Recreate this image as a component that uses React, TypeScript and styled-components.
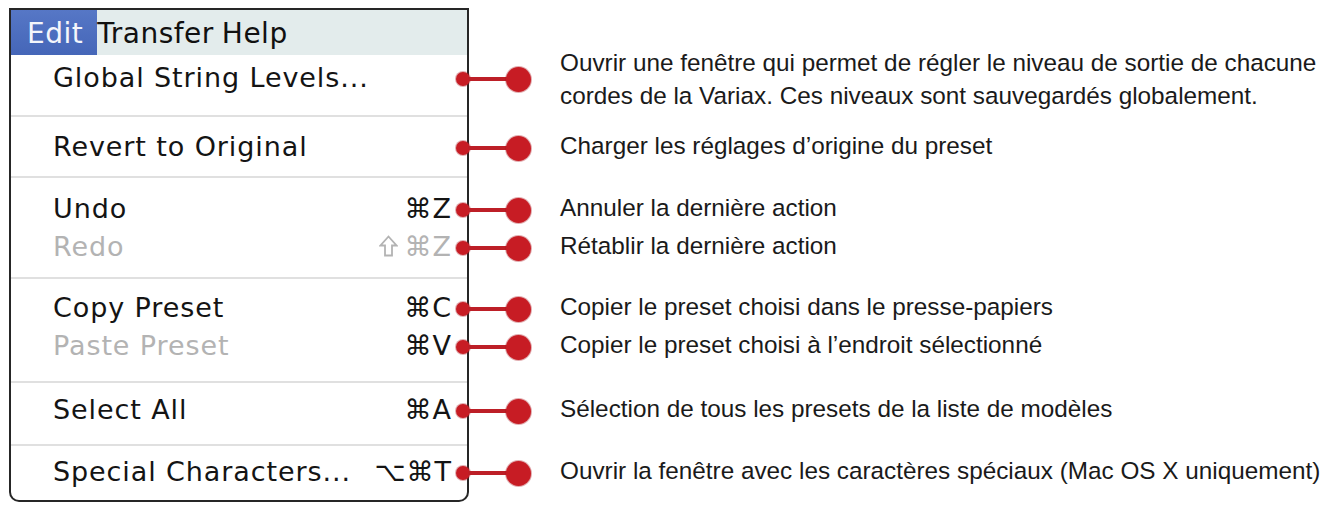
import React from 'react'
import styled, { createGlobalStyle } from 'styled-components'

const GlobalStyle = createGlobalStyle`
  html, body {
    margin: 0;
    padding: 0;
    background: #fff;
  }
`

type Entry = {
  label: string
  keys?: string
  shift?: boolean
  disabled?: boolean
  note: string[]
}

type Group = {
  top: number
  bottom: number
  entries: Entry[]
}

const groups: Group[] = [
  {
    top: 5,
    bottom: 17,
    entries: [
      {
        label: 'Global String Levels...',
        note: [
          'Ouvrir une fenêtre qui permet de régler le niveau de sortie de chacune',
          'cordes de la Variax. Ces niveaux sont sauvegardés globalement.',
        ],
      },
    ],
  },
  {
    top: 12,
    bottom: 9,
    entries: [
      { label: 'Revert to Original', note: ['Charger les réglages d’origine du preset'] },
    ],
  },
  {
    top: 13,
    bottom: 10,
    entries: [
      { label: 'Undo', keys: '⌘Z', note: ['Annuler la dernière action'] },
      { label: 'Redo', keys: '⌘Z', shift: true, disabled: true, note: ['Rétablir la dernière action'] },
    ],
  },
  {
    top: 11,
    bottom: 15,
    entries: [
      { label: 'Copy Preset', keys: '⌘C', note: ['Copier le preset choisi dans le presse-papiers'] },
      {
        label: 'Paste Preset',
        keys: '⌘V',
        disabled: true,
        note: ['Copier le preset choisi à l’endroit sélectionné'],
      },
    ],
  },
  {
    top: 9,
    bottom: 14,
    entries: [
      { label: 'Select All', keys: '⌘A', note: ['Sélection de tous les presets de la liste de modèles'] },
    ],
  },
  {
    top: 8,
    bottom: 8,
    entries: [
      {
        label: 'Special Characters...',
        keys: '⌥⌘T',
        note: ['Ouvrir la fenêtre avec les caractères spéciaux (Mac OS X uniquement)'],
      },
    ],
  },
]

// outline shift arrow, as drawn in the Mac menu
const ShiftIcon = () => (
  <svg width="19" height="22" viewBox="0 0 19 22" fill="none">
    <path
      d="M9.5 1.5 L17.5 10.5 H13 V20.5 H6 V10.5 H1.5 Z"
      stroke="currentColor"
      strokeWidth="1.8"
      strokeLinejoin="miter"
    />
  </svg>
)

export default function App() {
  return (
    <Page>
      <GlobalStyle />
      <MenuBar>
        <BarItem $active>Edit</BarItem>
        <BarItem>Transfer</BarItem>
        <BarItem>Help</BarItem>
      </MenuBar>
      {groups.map((group, gi) => {
        const last = gi === groups.length - 1
        return (
          <React.Fragment key={gi}>
            {gi > 0 && <Separator />}
            <GroupPad $h={group.top} />
            {group.entries.map((entry) => (
              <Row key={entry.label}>
                <Item $disabled={entry.disabled}>
                  <span>{entry.label}</span>
                  {entry.keys && (
                    <Keys $dim={entry.shift}>
                      {entry.shift && <ShiftIcon />}
                      {entry.keys}
                    </Keys>
                  )}
                </Item>
                <Callout>
                  <SmallDot />
                  <Line />
                  <BigDot />
                </Callout>
                <Note $multi={entry.note.length > 1}>
                  {entry.note.map((line) => (
                    <div key={line}>{line}</div>
                  ))}
                </Note>
              </Row>
            ))}
            <GroupPad $h={group.bottom} $last={last} />
          </React.Fragment>
        )
      })}
    </Page>
  )
}

const MENU_W = 460
const BORDER = '2px solid #262626'

const Page = styled.div`
  display: flex;
  flex-direction: column;
  padding: 8px 0 0 9px;
  font-family: 'DejaVu Sans', Verdana, sans-serif;
`

const MenuBar = styled.div`
  box-sizing: border-box;
  width: ${MENU_W}px;
  height: 47px;
  display: flex;
  align-items: stretch;
  background: #e3ecec;
  border: ${BORDER};
  border-bottom: none;
  font-size: 28px;
  letter-spacing: 0.5px;
  color: #111;
`

const BarItem = styled.div<{ $active?: boolean }>`
  display: flex;
  align-items: center;
  padding: 2px ${(p) => (p.$active ? '14px' : '8px')} 0 ${(p) => (p.$active ? '16px' : '0')};
  background: ${(p) => (p.$active ? 'linear-gradient(#5677c6, #4566b8)' : 'transparent')};
  color: ${(p) => (p.$active ? '#f4f6fb' : '#111')};
`

const Separator = styled.div`
  box-sizing: border-box;
  width: ${MENU_W}px;
  height: 2px;
  background: #e0e0e0;
  border-left: ${BORDER};
  border-right: ${BORDER};
`

const GroupPad = styled.div<{ $h: number; $last?: boolean }>`
  box-sizing: content-box;
  width: ${MENU_W - 4}px;
  height: ${(p) => p.$h}px;
  border-left: ${BORDER};
  border-right: ${BORDER};
  ${(p) =>
    p.$last &&
    `
    border-bottom: ${BORDER};
    border-radius: 0 0 16px 16px;
  `}
`

const Row = styled.div`
  display: flex;
  align-items: center;
  height: 38px;
`

const Item = styled.div<{ $disabled?: boolean }>`
  box-sizing: border-box;
  flex: none;
  width: ${MENU_W}px;
  height: 100%;
  display: flex;
  align-items: center;
  justify-content: space-between;
  padding: 0 15px 4px 42px;
  border-left: ${BORDER};
  border-right: ${BORDER};
  font-size: 27px;
  letter-spacing: 0.9px;
  color: ${(p) => (p.$disabled ? '#b3b3b3' : '#141414')};
`

const Keys = styled.span<{ $dim?: boolean }>`
  display: flex;
  align-items: center;
  gap: 7px;
  letter-spacing: 1px;
  color: ${(p) => (p.$dim ? '#b3b3b3' : '#141414')};
`

const Callout = styled.div`
  flex: none;
  display: flex;
  align-items: center;
  margin-left: -13px;
`

const SmallDot = styled.div`
  width: 14px;
  height: 14px;
  border-radius: 50%;
  background: #c71c24;
  box-shadow: 0 0 0 1px rgba(170, 20, 28, 0.35);
`

const Line = styled.div`
  width: 40px;
  height: 4px;
  margin: 0 -2px;
  background: #bd1f27;
`

const BigDot = styled.div`
  width: 25px;
  height: 25px;
  border-radius: 50%;
  background: #c71c24;
  box-shadow: 0 0 0 1px rgba(170, 20, 28, 0.35);
`

const Note = styled.div<{ $multi?: boolean }>`
  flex: none;
  margin-left: 29px;
  padding-bottom: ${(p) => (p.$multi ? '0' : '6px')};
  font-family: 'Liberation Sans', Arial, sans-serif;
  font-size: 24.3px;
  line-height: 33px;
  color: #1a1a1a;
  white-space: nowrap;
`
